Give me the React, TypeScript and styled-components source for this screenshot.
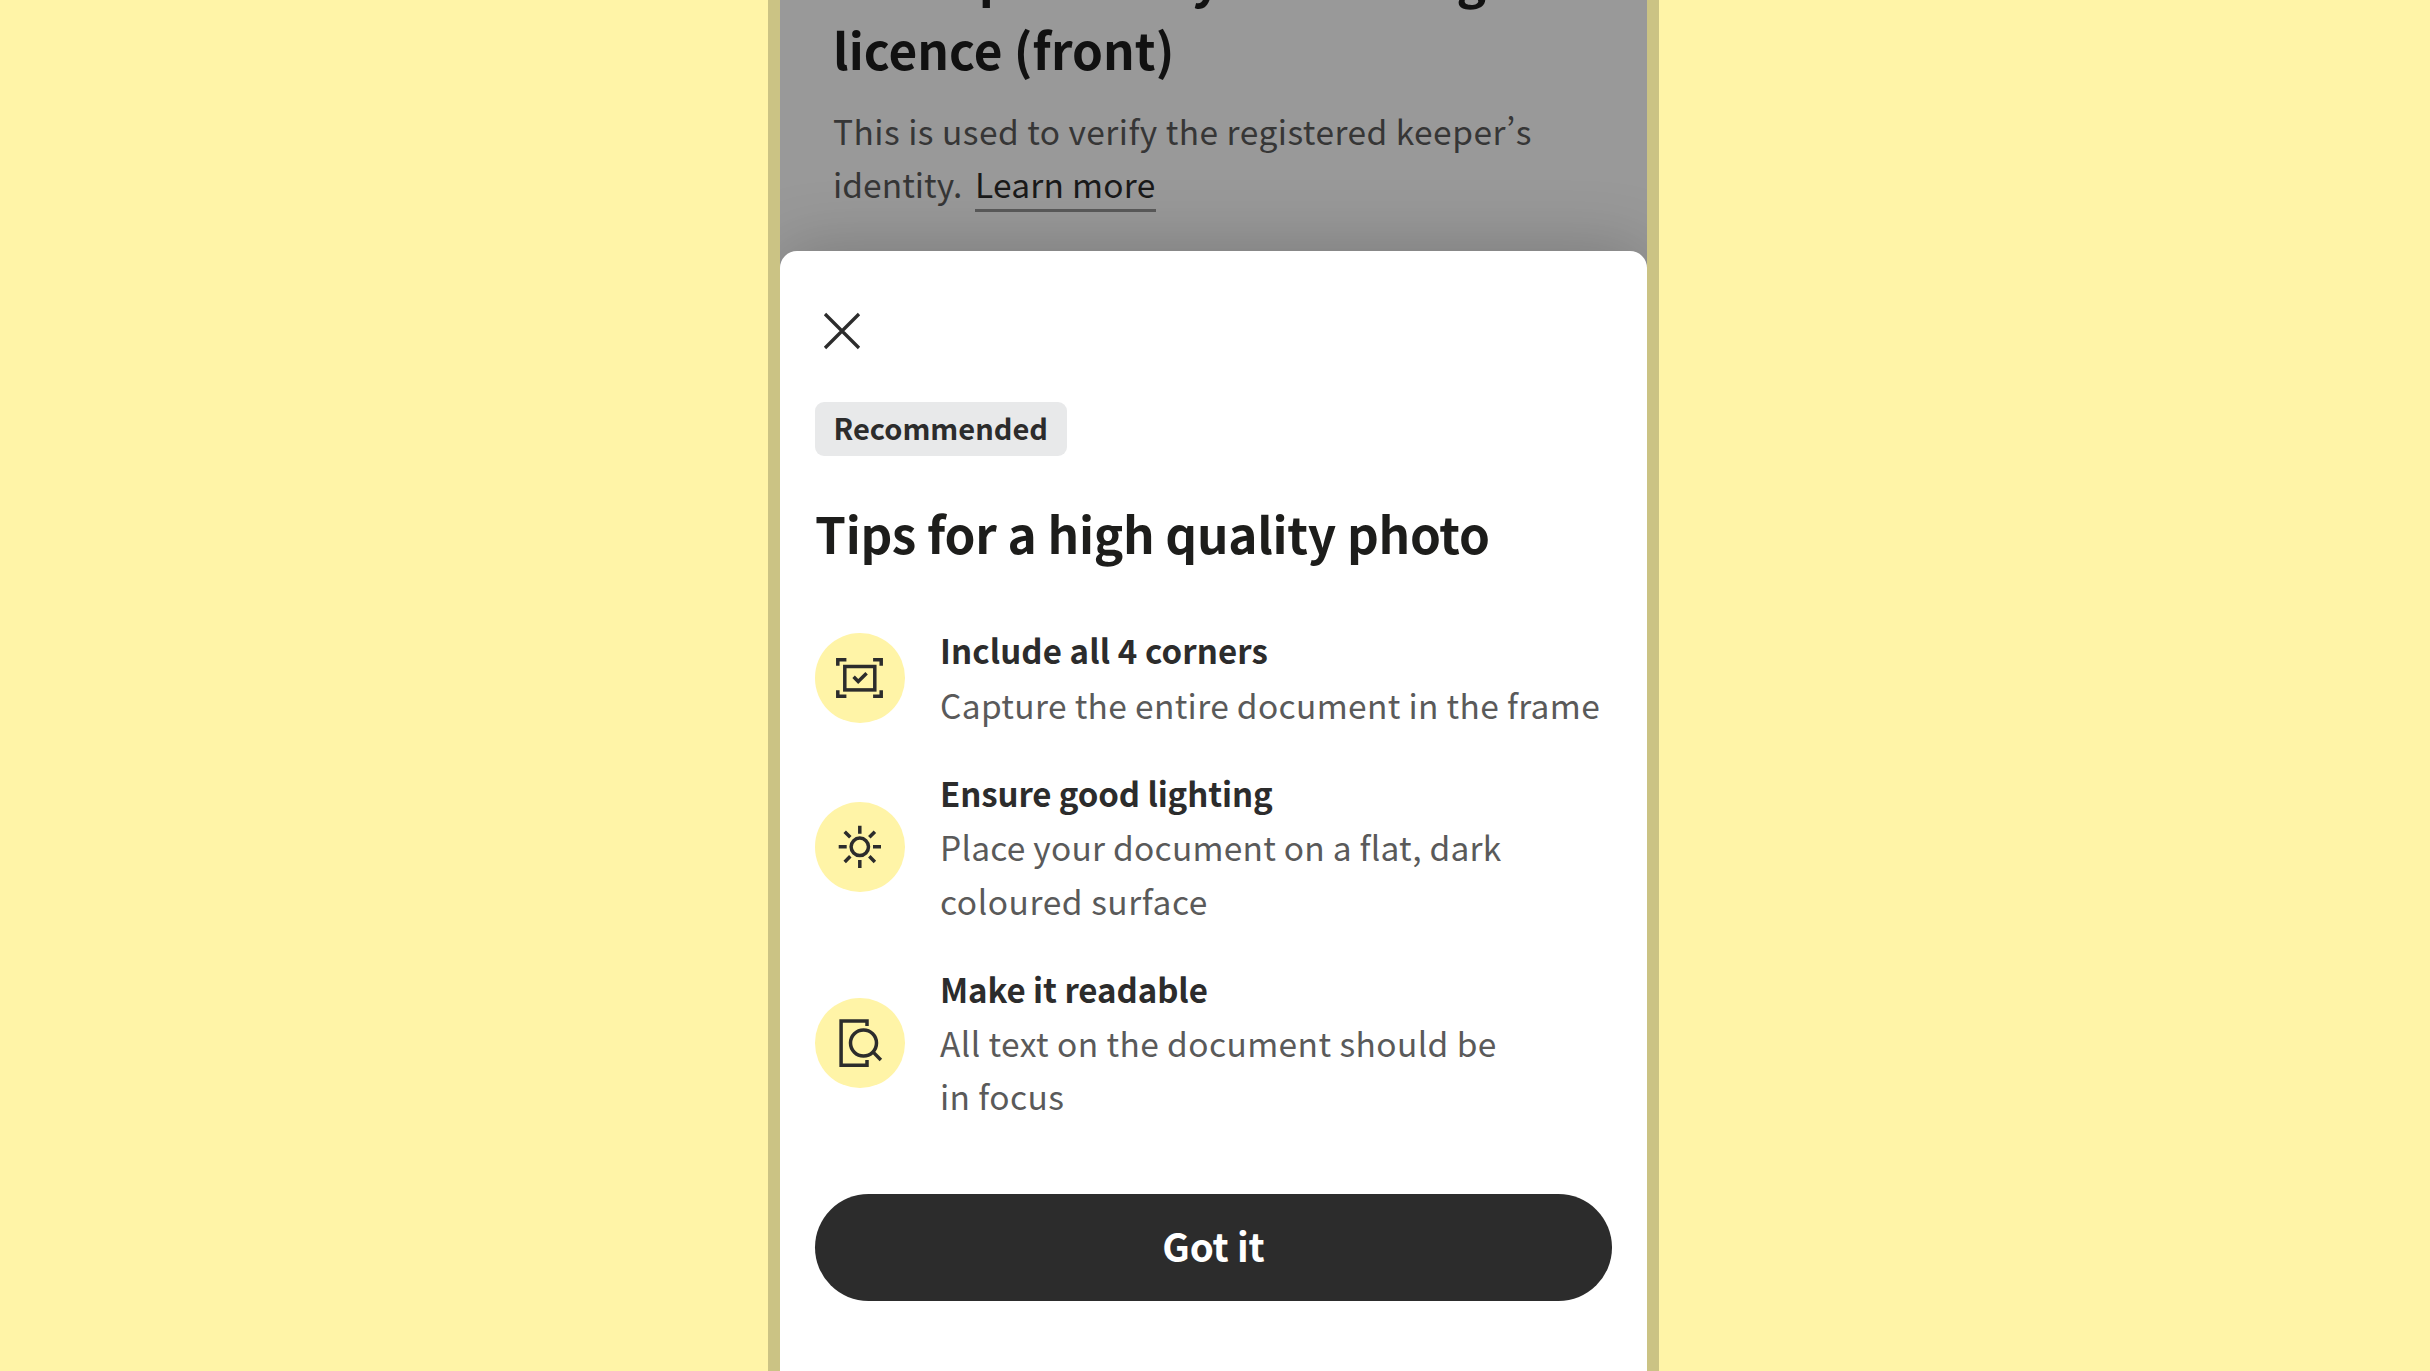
import React from 'react';
import styled, { createGlobalStyle } from 'styled-components';

const ink = '#2c2c2c';
const sun = '#fff4a7';

const GlobalStyle = createGlobalStyle`
  *, *::before, *::after { box-sizing: border-box; }
  html, body { margin: 0; padding: 0; background: ${sun}; }
  body { font-family: "Noto Sans CJK SC", "Noto Sans", sans-serif; }
  h1, h2, h3, p { margin: 0; font: inherit; }
`;

const Stage = styled.main`
  display: flex;
  justify-content: center;
  height: 1371px;
  padding-right: 3px;
  overflow: hidden;
  background: ${sun};
`;

const Phone = styled.div`
  display: flex;
  width: 891px;
  border: solid #cbc384;
  border-width: 0 12px;
`;

const Screen = styled.div`
  flex: 1;
  display: flex;
  flex-direction: column;
  overflow: hidden;
  background: #999;
`;

const Intro = styled.header`
  flex: none;
  display: flex;
  flex-direction: column;
  justify-content: flex-end;
  gap: 19px;
  height: 250.5px;
  padding: 0 53px 39.8px;
`;

const IntroTitle = styled.h1`
  flex: none;
  font-size: 49.5px;
  font-weight: 700;
  line-height: 73px;
  color: #111;
`;

const IntroText = styled.p`
  flex: none;
  font-size: 33.5px;
  line-height: 53.4px;
  color: #363636;
`;

const Line = styled.span<{ $track?: number }>`
  display: block;
  white-space: nowrap;
  letter-spacing: ${({ $track = 0 }) => $track}px;
`;

/* The CJK face sets this mark full width unless asked for the proportional form. */
const Apostrophe = styled.span`
  font-feature-settings: "pwid";
`;

const LearnMore = styled.a`
  margin-left: 5px;
  padding-bottom: 1px;
  border-bottom: 3px solid #5a5a5a;
  letter-spacing: 0.25px;
  color: #1a1a1a;
`;

const Sheet = styled.section`
  flex: 1;
  display: flex;
  flex-direction: column;
  align-items: flex-start;
  padding: 53px 35px 0;
  border-radius: 17px 17px 0 0;
  background: #fff;
  box-shadow: 0 0 70px rgba(0, 0, 0, 0.22);
`;

const CloseButton = styled.button`
  display: flex;
  align-items: center;
  justify-content: center;
  width: 54px;
  height: 54px;
  padding: 0;
  border: 0;
  background: none;
`;

const Badge = styled.span`
  display: flex;
  align-items: center;
  justify-content: center;
  width: 251.5px;
  height: 53.5px;
  margin-top: 44.5px;
  padding-bottom: 3.5px;
  border-radius: 9px;
  background: #e8e9ea;
  font-size: 29px;
  font-weight: 700;
  line-height: 44px;
  color: ${ink};
`;

const SheetTitle = styled.h2`
  margin-top: 41px;
  font-size: 49.5px;
  font-weight: 700;
  line-height: 71px;
  letter-spacing: -0.27px;
  white-space: nowrap;
  color: #1d1d1b;
`;

const TipList = styled.ul`
  display: flex;
  flex-direction: column;
  gap: 35.6px;
  margin: 56.8px 0 0;
  padding: 0;
  list-style: none;
`;

const Tip = styled.li`
  display: flex;
  align-items: center;
  gap: 35.5px;
`;

const TipIcon = styled.span`
  flex: none;
  display: flex;
  width: 89.5px;
  height: 89.5px;
  margin-top: 0.5px;
  border-radius: 50%;
  background: ${sun};
`;

const TipTitle = styled.h3`
  font-size: 33px;
  font-weight: 700;
  line-height: 53.4px;
  color: ${ink};
`;

const TipText = styled.p`
  font-size: 33.5px;
  line-height: 53.4px;
  color: #5a5a5a;
`;

const GotIt = styled.button`
  flex: none;
  align-self: stretch;
  display: flex;
  align-items: center;
  justify-content: center;
  height: 107px;
  margin-top: 71.1px;
  padding: 0 0 5px;
  border: 0;
  border-radius: 54px;
  background: ${ink};
  font-family: inherit;
  font-size: 38.5px;
  font-weight: 700;
  letter-spacing: -0.2px;
  color: #fff;
`;

const Glyph = styled.svg<{ $stroke?: number }>`
  display: block;
  width: 100%;
  height: 100%;
  fill: none;
  stroke: ${ink};
  stroke-width: ${({ $stroke = 3.5 }) => $stroke};
`;

const FrameIcon = () => (
  <Glyph viewBox="0 0 89.5 89.5">
    <path d="M22.8 32.7v-6h8.6M58.1 26.7h8.1v6M66.2 57.3v6h-8.1M31.4 63.3h-8.6v-6" />
    <rect x="29.8" y="33.5" width="30" height="23.4" />
    <path d="M38.6 43.8l4.6 4.7 8.4-8.3" />
  </Glyph>
);

const SunIcon = () => (
  <Glyph viewBox="0 0 89.5 89.5">
    <circle cx="44.8" cy="44.8" r="8.7" />
    <path d="M44.8 23.7v8M44.8 58v8M23.7 44.8h8M58 44.8h8M29.7 29.7l5.6 5.6M54.3 54.3l5.6 5.6M29.7 59.9l5.6-5.6M54.3 35.3l5.6-5.6" />
  </Glyph>
);

const DocumentSearchIcon = () => (
  <Glyph viewBox="0 0 89.5 89.5">
    <path d="M52 28v-5H26.1v44.3H52V62" />
    <circle cx="48.5" cy="45" r="13" />
    <path d="M57.7 53.6l8.2 8.4" />
  </Glyph>
);

interface TipData {
  title: string;
  titleTrack: number;
  icon: React.ReactNode;
  lines: { text: string; track: number }[];
}

const tips: TipData[] = [
  {
    title: 'Include all 4 corners',
    titleTrack: 0.1,
    icon: <FrameIcon />,
    lines: [{ text: 'Capture the entire document in the frame', track: 0.33 }],
  },
  {
    title: 'Ensure good lighting',
    titleTrack: -0.1,
    icon: <SunIcon />,
    lines: [
      { text: 'Place your document on a flat, dark', track: 0.24 },
      { text: 'coloured surface', track: 0.55 },
    ],
  },
  {
    title: 'Make it readable',
    titleTrack: -0.04,
    icon: <DocumentSearchIcon />,
    lines: [
      { text: 'All text on the document should be', track: 0.41 },
      { text: 'in focus', track: 0.4 },
    ],
  },
];

export default function App() {
  return (
    <>
      <GlobalStyle />
      <Stage>
        <Phone>
          <Screen>
            <Intro>
              <IntroTitle>
                <Line $track={-0.25}>Add a photo of your driving</Line>
                <Line $track={0.05}>licence (front)</Line>
              </IntroTitle>
              <IntroText>
                <Line $track={0.47}>
                  This is used to verify the registered keeper<Apostrophe>’</Apostrophe>s
                </Line>
                <Line $track={0.05}>
                  identity. <LearnMore>Learn more</LearnMore>
                </Line>
              </IntroText>
            </Intro>
            <Sheet>
              <CloseButton aria-label="Close">
                <Glyph viewBox="0 0 54 54" $stroke={3.3}>
                  <path d="M10 10l34 34M44 10L10 44" />
                </Glyph>
              </CloseButton>
              <Badge>Recommended</Badge>
              <SheetTitle>Tips for a high quality photo</SheetTitle>
              <TipList>
                {tips.map((tip) => (
                  <Tip key={tip.title}>
                    <TipIcon>{tip.icon}</TipIcon>
                    <div>
                      <TipTitle>
                        <Line $track={tip.titleTrack}>{tip.title}</Line>
                      </TipTitle>
                      <TipText>
                        {tip.lines.map((line) => (
                          <Line key={line.text} $track={line.track}>
                            {line.text}
                          </Line>
                        ))}
                      </TipText>
                    </div>
                  </Tip>
                ))}
              </TipList>
              <GotIt>Got it</GotIt>
            </Sheet>
          </Screen>
        </Phone>
      </Stage>
    </>
  );
}
